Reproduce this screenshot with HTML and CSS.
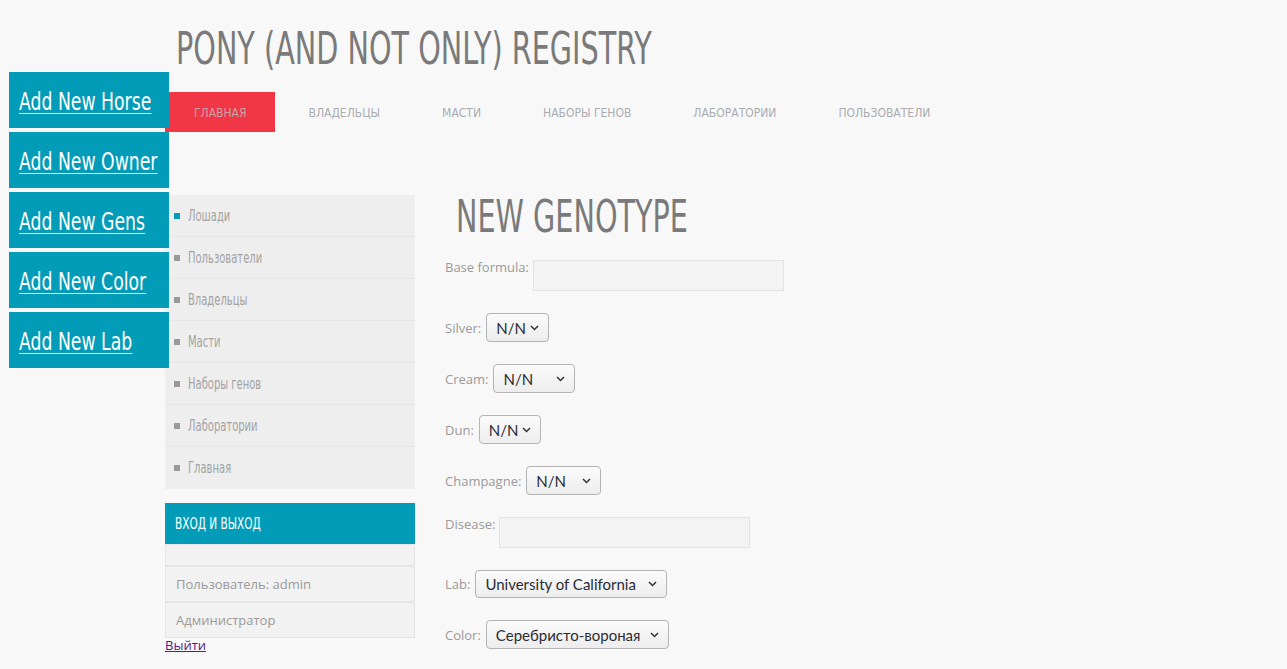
FILE: index.html
```html
<!DOCTYPE html>
<html lang="ru">
<head>
<meta charset="utf-8">
<title>Pony registry — New genotype</title>
<link rel="stylesheet" href="styles.css">
</head>
<body>
<div class="quick">
  <a class="quick-btn" href="#"><span class="nar">Add New Horse</span></a>
  <a class="quick-btn" href="#"><span class="nar">Add New Owner</span></a>
  <a class="quick-btn" href="#"><span class="nar">Add New Gens</span></a>
  <a class="quick-btn" href="#"><span class="nar">Add New Color</span></a>
  <a class="quick-btn" href="#"><span class="nar">Add New Lab</span></a>
</div>
<div class="page">
  <header class="top">
    <h1 class="site-title"><span class="squeeze">PONY (AND NOT ONLY) REGISTRY</span></h1>
    <nav class="menu">
      <a class="menu-item active" href="#">Главная</a>
      <a class="menu-item" href="#">Владельцы</a>
      <a class="menu-item" href="#">Масти</a>
      <a class="menu-item" href="#">Наборы генов</a>
      <a class="menu-item" href="#">Лаборатории</a>
      <a class="menu-item" href="#">Пользователи</a>
    </nav>
  </header>
  <div class="layout">
    <aside class="sidebar">
      <ul class="side-menu">
        <li class="side-item current"><span class="dot"></span><span class="side-text">Лошади</span></li>
        <li class="side-item"><span class="dot"></span><span class="side-text">Пользователи</span></li>
        <li class="side-item"><span class="dot"></span><span class="side-text">Владельцы</span></li>
        <li class="side-item"><span class="dot"></span><span class="side-text">Масти</span></li>
        <li class="side-item"><span class="dot"></span><span class="side-text">Наборы генов</span></li>
        <li class="side-item"><span class="dot"></span><span class="side-text">Лаборатории</span></li>
        <li class="side-item"><span class="dot"></span><span class="side-text">Главная</span></li>
      </ul>
      <section class="login">
        <h3 class="login-head"><span class="head-text">Вход и выход</span></h3>
        <div class="login-row"></div>
        <div class="login-row">Пользователь: admin</div>
        <div class="login-row">Администратор</div>
      </section>
      <a class="logout" href="#">Выйти</a>
    </aside>
    <main class="content">
      <h2 class="page-title"><span class="squeeze">NEW GENOTYPE</span></h2>
      <form class="form">
        <div class="row row-top">
          <label class="lbl">Base formula:</label>
          <textarea class="area"></textarea>
        </div>
        <div class="row">
          <label class="lbl">Silver:</label>
          <select class="sel w-silver"><option>N/N</option><option>Z/N</option><option>Z/Z</option></select>
        </div>
        <div class="row">
          <label class="lbl">Cream:</label>
          <select class="sel w-cream"><option>N/N</option><option>Cr/N</option><option>Cr/Cr</option></select>
        </div>
        <div class="row">
          <label class="lbl">Dun:</label>
          <select class="sel w-dun"><option>N/N</option><option>D/N</option><option>D/D</option></select>
        </div>
        <div class="row">
          <label class="lbl">Champagne:</label>
          <select class="sel w-champ"><option>N/N</option><option>Ch/N</option><option>Ch/Ch</option></select>
        </div>
        <div class="row row-top">
          <label class="lbl">Disease:</label>
          <textarea class="area"></textarea>
        </div>
        <div class="row">
          <label class="lbl">Lab:</label>
          <select class="sel w-lab"><option>University of California</option></select>
        </div>
        <div class="row">
          <label class="lbl">Color:</label>
          <select class="sel w-color"><option>Серебристо-вороная</option></select>
        </div>
      </form>
    </main>
  </div>
</div>
</body>
</html>
```
FILE: styles.css
```css
* { box-sizing: border-box; }

body {
  margin: 0;
  background: #f8f8f8;
  font-family: "Open Sans", "Noto Sans", sans-serif;
  color: #999;
}

.quick {
  position: absolute;
  left: 9px;
  top: 72px;
  width: 160px;
  display: flex;
  flex-direction: column;
  gap: 4px;
  z-index: 2;
}

.quick-btn {
  display: block;
  height: 56px;
  padding: 4px 0 0 10px;
  line-height: 52px;
  background: #029cb9;
  color: #fff;
  font-family: "DejaVu Sans Condensed", "DejaVu Sans", sans-serif;
  font-size: 24px;
  text-decoration: underline;
  text-underline-offset: 3px;
  text-decoration-thickness: 1px;
  white-space: nowrap;
  overflow: hidden;
}

.nar {
  display: inline-block;
  transform: scaleX(0.8);
  transform-origin: left center;
  text-decoration: underline;
  text-underline-offset: 3px;
  text-decoration-thickness: 1px;
}

.page {
  margin-left: 165px;
}

.top {
  padding-top: 20px;
}

.site-title {
  margin: 0;
  padding-left: 11px;
  height: 58px;
  line-height: 58px;
  font-weight: normal;
  font-size: 44px;
  color: #7a7a7a;
  font-family: "DejaVu Sans Condensed", "DejaVu Sans", sans-serif;
  white-space: nowrap;
}

.squeeze {
  display: inline-block;
  transform: scaleX(0.725);
  transform-origin: left center;
}

.menu {
  margin: 14px 0 0 0;
  display: flex;
  gap: 5px;
  height: 40px;
}

.menu-item {
  display: block;
  padding: 3px 28px 0 29px;
  line-height: 37px;
  font-family: "DejaVu Sans Condensed", "DejaVu Sans", sans-serif;
  font-size: 12px;
  text-transform: uppercase;
  text-decoration: none;
  color: #aaacb0;
}

.menu-item.active {
  background: #f13646;
  color: #c4a4a8;
}

.layout {
  margin-top: 63px;
  display: flex;
  gap: 30px;
  align-items: flex-start;
}

.sidebar {
  width: 250px;
  flex: none;
}

.side-menu {
  list-style: none;
  margin: 0;
  padding: 0;
  background: #eee;
}

.side-item {
  height: 42px;
  display: flex;
  align-items: center;
  gap: 8px;
  padding-left: 9px;
  border-bottom: 1px solid #e6e6e6;
  font-family: "DejaVu Sans Condensed", "DejaVu Sans", sans-serif;
  font-size: 15px;
  color: #a3a3a3;
}

.side-item:last-child { border-bottom: 0; }

.side-text {
  display: inline-block;
  transform: scaleX(0.74);
  transform-origin: left center;
  white-space: nowrap;
}

.dot {
  width: 6px;
  height: 6px;
  background: #999;
  flex: none;
}

.current .dot { background: #029cb9; }

.login {
  margin-top: 14px;
}

.login-head {
  margin: 0;
  height: 41px;
  padding: 1px 0 0 10px;
  line-height: 40px;
  background: #029cb9;
  color: #fff;
  font-weight: normal;
  font-family: "DejaVu Sans Condensed", "DejaVu Sans", sans-serif;
  font-size: 15px;
  text-transform: uppercase;
}

.head-text {
  display: inline-block;
  transform: scaleX(0.78);
  transform-origin: left center;
}

.login-row {
  min-height: 22px;
  padding: 10px 10px;
  line-height: 14px;
  background: #f2f2f2;
  border: 1px solid #e6e6e6;
  font-size: 13px;
  color: #9a9a9a;
}

.login-row:empty { padding: 0; height: 22px; }

.logout {
  display: block;
  line-height: 15px;
  font-size: 13px;
  color: #551a8b;
}

.content {
  flex: 1;
}

.page-title {
  margin: 0;
  padding: 0 0 0 11px;
  height: 65px;
  line-height: 44px;
  font-weight: normal;
  font-size: 44px;
  color: #7a7a7a;
  font-family: "DejaVu Sans Condensed", "DejaVu Sans", sans-serif;
}

.form {
  display: flex;
  flex-direction: column;
  gap: 22px;
}

.row {
  display: flex;
  align-items: center;
  gap: 5px;
}

.row-top { align-items: flex-start; gap: 4px; }

.lbl {
  font-size: 13px;
  line-height: 14px;
  color: #9a9a9a;
}

.area {
  display: block;
  width: 251px;
  height: 31px;
  margin: 0;
  background: #f3f3f3;
  border: 1px solid #e3e3e3;
  resize: none;
  font: inherit;
}

.sel {
  appearance: none;
  -webkit-appearance: none;
  height: 29px;
  margin: 0;
  padding: 0 18px 0 9px;
  border: 1px solid #b4b4b4;
  border-radius: 4px;
  background-color: #f6f6f6;
  background-image: url("data:image/svg+xml,%3Csvg xmlns='http://www.w3.org/2000/svg' width='9' height='6' viewBox='0 0 9 6'%3E%3Cpath d='M1 1l3.5 3.5L8 1' fill='none' stroke='%23333' stroke-width='1.5'/%3E%3C/svg%3E"), linear-gradient(#fbfbfb, #ededed);
  background-repeat: no-repeat, no-repeat;
  background-position: right 9px center, 0 0;
  font-family: "Lato", "Noto Sans", sans-serif;
  font-size: 15px;
  color: #2b2b33;
}

.w-silver { width: 63px; }
.w-cream { width: 82px; }
.w-dun { width: 62px; }
.w-champ { width: 75px; }
.w-lab { width: 192px; height: 28px; }
.w-color { width: 183px; }
```
